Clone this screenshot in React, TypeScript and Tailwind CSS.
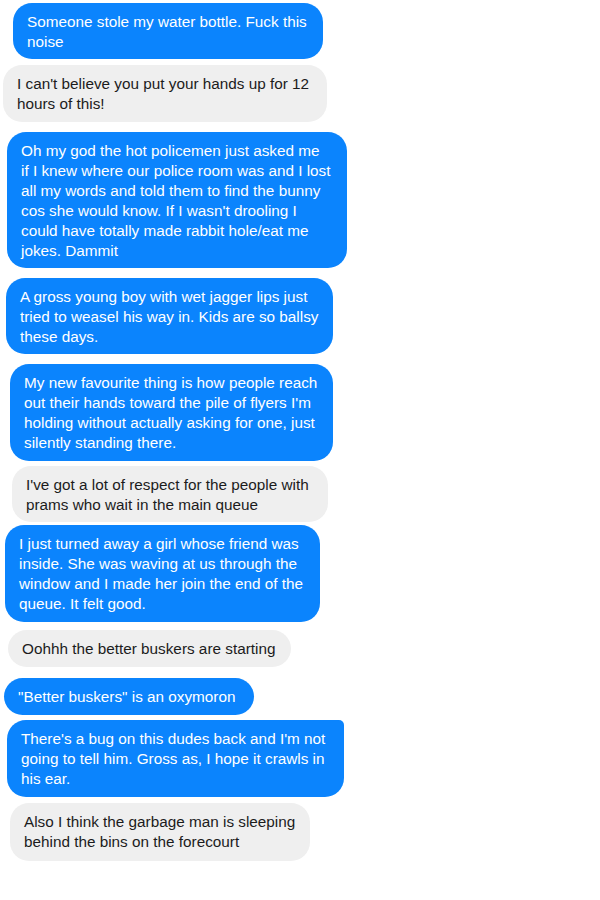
import React from "react";

type Msg = {
  lines: string[];
  blue: boolean;
  ml: string;
  w: string;
  h: string;
  mt: string;
  extra?: string;
};

const msgs: Msg[] = [
  { lines: ["Someone stole my water bottle. Fuck this", "noise"], blue: true, ml: "ml-[13px]", w: "w-[310px]", h: "h-[56px]", mt: "mt-[3px]" },
  { lines: ["I can't believe you put your hands up for 12", "hours of this!"], blue: false, ml: "ml-[3px]", w: "w-[324px]", h: "h-[57px]", mt: "mt-[6px]" },
  {
    lines: [
      "Oh my god the hot policemen just asked me",
      "if I knew where our police room was and I lost",
      "all my words and told them to find the bunny",
      "cos she would know. If I wasn't drooling I",
      "could have totally made rabbit hole/eat me",
      "jokes. Dammit",
    ],
    blue: true,
    ml: "ml-[7px]",
    w: "w-[340px]",
    h: "h-[136px]",
    mt: "mt-[10px]",
  },
  {
    lines: [
      "A gross young boy with wet jagger lips just",
      "tried to weasel his way in. Kids are so ballsy",
      "these days.",
    ],
    blue: true,
    ml: "ml-[6px]",
    w: "w-[327px]",
    h: "h-[76px]",
    mt: "mt-[10px]",
  },
  {
    lines: [
      "My new favourite thing is how people reach",
      "out their hands toward the pile of flyers I'm",
      "holding without actually asking for one, just",
      "silently standing there.",
    ],
    blue: true,
    ml: "ml-[10px]",
    w: "w-[323px]",
    h: "h-[97px]",
    mt: "mt-[10px]",
  },
  {
    lines: ["I've got a lot of respect for the people with", "prams who wait in the main queue"],
    blue: false,
    ml: "ml-[12px]",
    w: "w-[316px]",
    h: "h-[56px]",
    mt: "mt-[5px]",
  },
  {
    lines: [
      "I just turned away a girl whose friend was",
      "inside. She was waving at us through the",
      "window and I made her join the end of the",
      "queue. It felt good.",
    ],
    blue: true,
    ml: "ml-[5px]",
    w: "w-[315px]",
    h: "h-[97px]",
    mt: "mt-[3px]",
  },
  { lines: ["Oohhh the better buskers are starting"], blue: false, ml: "ml-[8px]", w: "w-[283px]", h: "h-[37px]", mt: "mt-[8px]" },
  { lines: ["\"Better buskers\" is an oxymoron"], blue: true, ml: "ml-[4px]", w: "w-[250px]", h: "h-[37px]", mt: "mt-[11px]" },
  {
    lines: [
      "There's a bug on this dudes back and I'm not",
      "going to tell him. Gross as, I hope it crawls in",
      "his ear.",
    ],
    blue: true,
    ml: "ml-[7px]",
    w: "w-[337px]",
    h: "h-[77px]",
    mt: "mt-[5px]",
    extra: "rounded-tr-[5px]",
  },
  {
    lines: ["Also I think the garbage man is sleeping", "behind the bins on the forecourt"],
    blue: false,
    ml: "ml-[10px]",
    w: "w-[300px]",
    h: "h-[58px]",
    mt: "mt-[6px]",
  },
];

export default function App() {
  return (
    <div
      className="w-[600px] h-[900px] bg-white overflow-hidden flex flex-col items-start"
      style={{ fontFamily: '"Liberation Sans", Arial, sans-serif' }}
    >
      {msgs.map((m, i) => (
        <div
          key={i}
          className={`${m.ml} ${m.w} ${m.h} ${m.mt} shrink-0 rounded-[19px] px-[14px] pt-[9px] text-[15.3px] leading-5 whitespace-nowrap ${
            m.blue ? "bg-[#0b84fd] text-white" : "bg-[#efefef] text-[#1c1c1c]"
          } ${m.extra ?? ""}`}
        >
          {m.lines.map((l, j) => (
            <div key={j}>{l}</div>
          ))}
        </div>
      ))}
    </div>
  );
}
